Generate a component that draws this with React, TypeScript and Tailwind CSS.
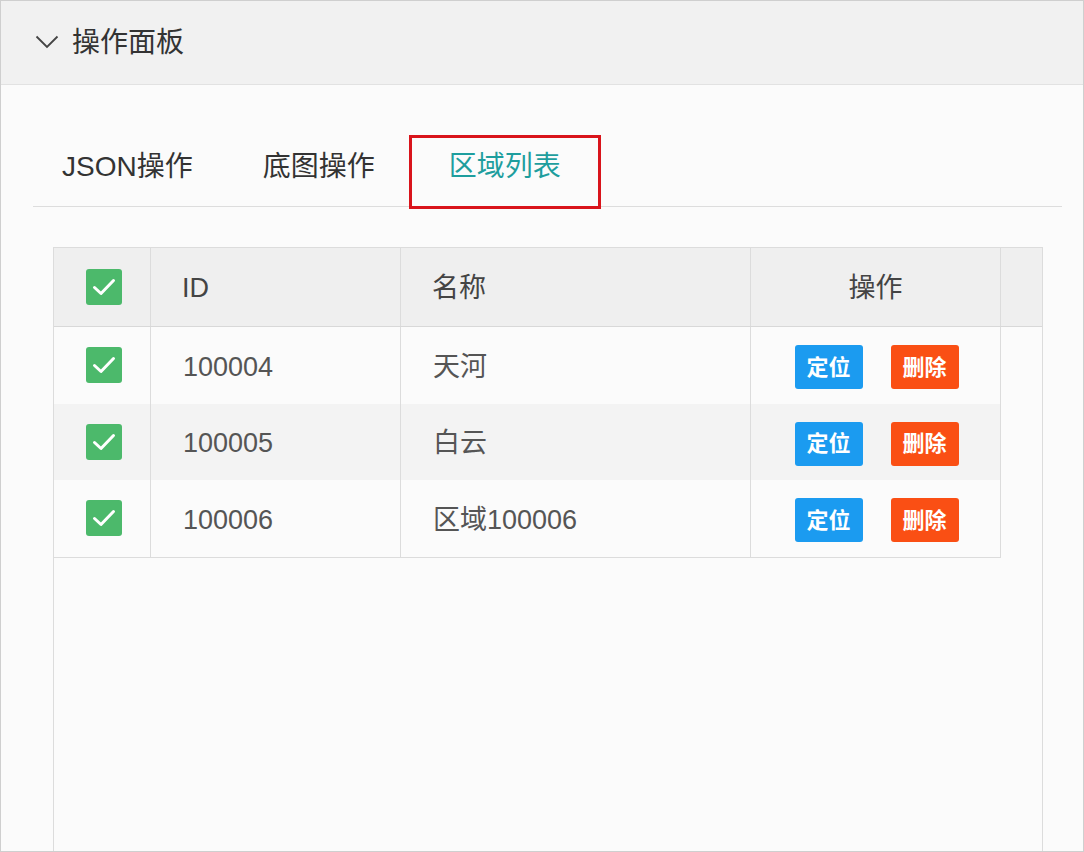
import React from "react";

type Row = { id: string; name: string; striped?: boolean };

const rows: Row[] = [
  { id: "100004", name: "天河" },
  { id: "100005", name: "白云", striped: true },
  { id: "100006", name: "区域100006" },
];

function Check() {
  return (
    <span className="flex h-[36px] w-[36px] items-center justify-center rounded-[3px] bg-[#4cb96b]">
      <svg width="36" height="36" viewBox="0 0 36 36" fill="none">
        <path d="M8.5 18.5l6.5 6L27.5 11.5" stroke="white" strokeWidth="3" strokeLinecap="round" strokeLinejoin="round" />
      </svg>
    </span>
  );
}

export default function App() {
  return (
    <div
      className="flex h-[852px] w-[1084px] flex-col border border-[#cfcfcf] bg-[#fbfbfb] text-[#333]"
      style={{ fontFamily: '"Liberation Sans", "Noto Sans CJK SC", sans-serif' }}
    >
      {/* Panel header */}
      <div className="flex h-[84px] shrink-0 items-center border-b border-[#e2e2e2] bg-[#f1f1f1] pl-[34px]">
        <svg width="24" height="14" viewBox="0 0 24 14" fill="none" className="mb-[2px]">
          <path d="M1.5 1.5L12 12L22.5 1.5" stroke="#444" strokeWidth="1.8" />
        </svg>
        <span className="ml-[13px] text-[28px] leading-none text-[#333]">操作面板</span>
      </div>

      {/* Body */}
      <div className="flex flex-1 flex-col pl-[32px] pr-[21px]">
        {/* Tabs */}
        <div className="mt-[50px] flex h-[72px] shrink-0 items-start border-b border-[#dddddd] pl-[29px] text-[28px]">
          <div className="pt-[15px] leading-[33px] text-[#333]">JSON操作</div>
          <div className="ml-[70px] pt-[15px] leading-[33px] text-[#333]">底图操作</div>
          <div className="ml-[34px] flex h-[74px] w-[192px] justify-center border-[3px] border-[#d9141b] pt-[12px] leading-[33px] text-[#1e9e9e]">
            区域列表
          </div>
        </div>

        {/* Table */}
        <div className="ml-[20px] mt-[40px] flex w-[990px] flex-1 flex-col border-x border-t border-[#dcdcdc]">
          <div className="flex h-[79px] shrink-0 border-b border-[#d8d8d8] bg-[#efefef] text-[27px] text-[#444]">
            <div className="flex w-[97px] items-center justify-center border-r border-[#dcdcdc] pl-[3px]">
              <Check />
            </div>
            <div className="flex w-[250px] items-center border-r border-[#dcdcdc] pl-[31px] pt-[3px]">ID</div>
            <div className="flex w-[350px] items-center border-r border-[#dcdcdc] pl-[31px] pt-[3px]">名称</div>
            <div className="flex w-[250px] items-center justify-center border-r border-[#dcdcdc] pt-[3px]">操作</div>
            <div className="flex-1" />
          </div>

          <div className="w-[947px] border-b border-r border-[#dcdcdc]">
            {rows.map((r) => (
              <div
                key={r.id}
                className={`flex h-[76.5px] text-[27px] text-[#555] ${r.striped ? "bg-[#f3f3f3]" : "bg-[#fbfbfb]"}`}
              >
                <div className="flex w-[97px] items-center justify-center border-r border-[#dcdcdc] pl-[3px]">
                  <Check />
                </div>
                <div className="flex w-[250px] items-center border-r border-[#dcdcdc] pl-[32px] pt-[3px]">{r.id}</div>
                <div className="flex w-[350px] items-center border-r border-[#dcdcdc] pl-[32px] pt-[3px]">{r.name}</div>
                <div className="flex flex-1 items-center justify-center gap-[28px] pl-[2px] pt-[4px]">
                  <button className="h-[44px] w-[68px] rounded-[3px] bg-[#1b9bf0] text-[22px] font-bold text-white">
                    定位
                  </button>
                  <button className="h-[44px] w-[68px] rounded-[3px] bg-[#fa4f14] text-[22px] font-bold text-white">
                    删除
                  </button>
                </div>
              </div>
            ))}
          </div>
        </div>
      </div>
    </div>
  );
}
